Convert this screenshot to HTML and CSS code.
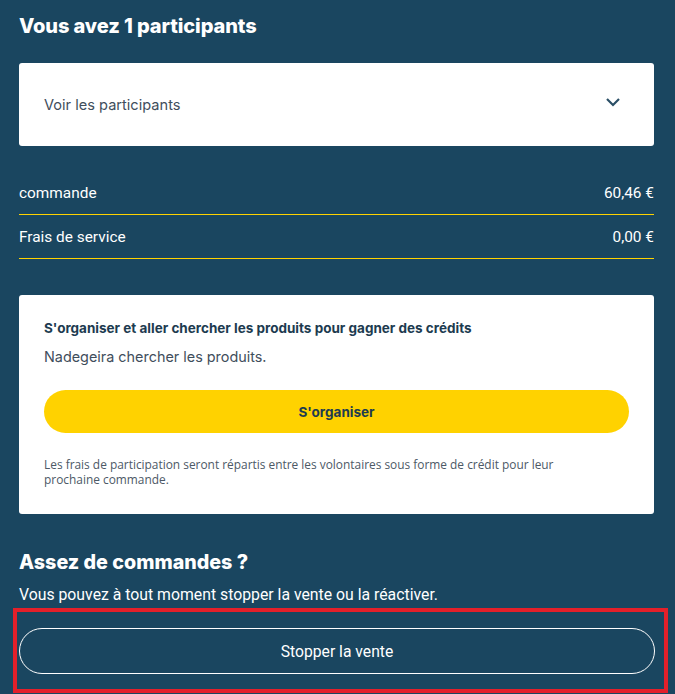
FILE: index.html
```html
<!DOCTYPE html>
<html lang="fr">
<head>
    <meta charset="UTF-8">
    <meta name="viewport" content="width=device-width, initial-scale=1.0">
    <title>Participants</title>
    <link rel="stylesheet" href="styles.css">
</head>
<body>
    <div class="page">
        <h1>Vous avez 1 participants</h1>

        <div class="dropdown">
            <span>Voir les participants</span>
            <svg class="chevron" width="16" height="10" viewBox="0 0 16 10">
                <path d="M2 2 L8 8 L14 2" fill="none" stroke="#2b4f66" stroke-width="2.2"/>
            </svg>
        </div>

        <div class="totals">
            <div class="total-row">
                <span>commande</span>
                <span>60,46 €</span>
            </div>
            <div class="total-row">
                <span>Frais de service</span>
                <span>0,00 €</span>
            </div>
        </div>

        <div class="volunteer-card">
            <h3>S'organiser et aller chercher les produits pour gagner des crédits</h3>
            <p class="who">Nadegeira chercher les produits.</p>
            <button class="btn-yellow">S'organiser</button>
            <p class="note">Les frais de participation seront répartis entre les volontaires sous forme de crédit pour leur prochaine commande.</p>
        </div>

        <h2>Assez de commandes ?</h2>
        <p class="stop-text">Vous pouvez à tout moment stopper la vente ou la réactiver.</p>
    </div>

    <div class="highlight">
        <button class="btn-outline">Stopper la vente</button>
    </div>
</body>
</html>
```

FILE: styles.css
```css
body {
    margin: 0;
    background-color: #1a4660;
    color: #fff;
    font-family: Roboto, "Liberation Sans", sans-serif;
    width: 675px;
    height: 694px;
    overflow: hidden;
}
.page {
    padding: 14px 21px 0 19px;
}
h1 {
    margin: 0;
    font-family: Inter, "Open Sans", sans-serif;
    font-size: 20px;
    font-weight: 800;
    line-height: 24px;
    letter-spacing: -0.1px;
}
.dropdown {
    margin-top: 25px;
    height: 83px;
    background-color: #fff;
    border-radius: 3px;
    display: flex;
    align-items: center;
    justify-content: space-between;
    padding: 0 33px 0 25px;
    box-sizing: border-box;
    color: #3f4e5c;
    font-family: Inter, "Open Sans", sans-serif;
    font-size: 14.6px;
}
.chevron {
    margin-top: -6px;
}
.totals {
    margin-top: 25px;
}
.total-row {
    height: 43px;
    display: flex;
    align-items: center;
    justify-content: space-between;
    border-bottom: 1.5px solid #ffd200;
    font-size: 15.4px;
}
.volunteer-card {
    margin-top: 36px;
    background-color: #fff;
    border-radius: 3px;
    padding: 24px 25px 27px 25px;
    color: #1d3b50;
}
.volunteer-card h3 {
    margin: 0;
    font-family: Inter, "Open Sans", sans-serif;
    font-size: 13.5px;
    font-weight: 700;
    line-height: 18px;
}
.who {
    margin: 10px 0 0 0;
    font-family: Inter, "Open Sans", sans-serif;
    font-size: 14.4px;
    line-height: 20px;
    color: #3f4e5c;
}
.btn-yellow {
    display: block;
    width: 100%;
    height: 43px;
    margin-top: 23px;
    border: none;
    border-radius: 22px;
    background-color: #ffd200;
    color: #1d3b50;
    font-family: Inter, "Open Sans", sans-serif;
    font-size: 13.5px;
    font-weight: 700;
}
.note {
    margin: 24px 0 0 0;
    max-width: 545px;
    font-family: "Open Sans", Roboto, sans-serif;
    font-size: 11.9px;
    line-height: 15px;
    color: #4d5966;
}
h2 {
    margin: 36px 0 0 0;
    font-family: Inter, "Open Sans", sans-serif;
    font-size: 19.7px;
    font-weight: 800;
    line-height: 24px;
}
.stop-text {
    margin: 12px 0 0 0;
    font-size: 15.8px;
    line-height: 18px;
}
.highlight {
    margin: 4px 0 0 13px;
    width: 645px;
    height: 61px;
    border: 4px solid #e4202a;
    padding: 16px 0 0 2px;
}
.btn-outline {
    display: block;
    width: 636px;
    height: 46px;
    border: 1.5px solid #fff;
    border-radius: 23px;
    background: transparent;
    color: #fff;
    font-family: Roboto, "Liberation Sans", sans-serif;
    font-size: 15.7px;
}
```
